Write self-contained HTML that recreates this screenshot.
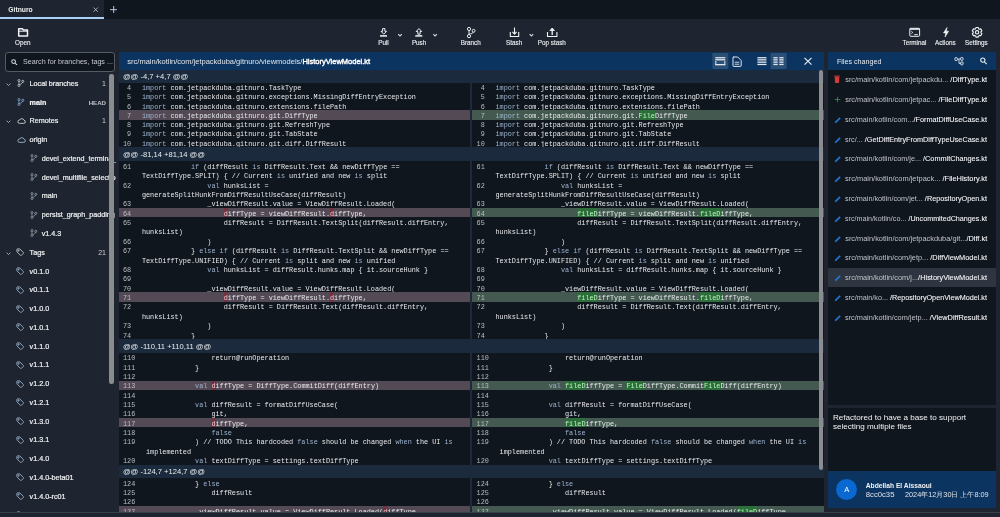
<!DOCTYPE html>
<html><head><meta charset="utf-8">
<style>
*{margin:0;padding:0;box-sizing:border-box}
html,body{width:1000px;height:517px;overflow:hidden;-webkit-font-smoothing:antialiased;background:#1f2530;font-family:"Liberation Sans",sans-serif;color:#e6e8eb}
.abs{position:absolute}
#tabbar{position:absolute;left:0;top:0;width:1000px;height:19px;background:#10161e}
#tab{position:absolute;left:0;top:0;width:104px;height:19px;background:#1f2530}
#tab .t{position:absolute;left:8.3px;top:5px;font-size:6.75px;font-weight:bold;color:#eef0f2;line-height:9px}
#tab .ul{position:absolute;left:0;top:17px;width:104px;height:2px;background:#a9d1f7}
.tb{position:absolute;top:23px;text-align:center;font-size:6.6px;color:#e4e6e9;line-height:8px}
.tb svg{position:absolute}
.tbl{position:absolute;top:38.9px;white-space:nowrap;font-size:6.3px;line-height:8px;color:#eceef1;-webkit-text-stroke:0.12px #eceef1}
#search{position:absolute;left:5px;top:52.3px;width:109.7px;height:19.3px;background:#10161e;border:1px solid #565b63;border-radius:3px}
#search .t{position:absolute;left:17px;top:5.1px;font-size:7.16px;color:#c4c7cc;white-space:nowrap;line-height:9px}
#sidebar{position:absolute;left:0;top:52px;width:115.5px;height:461px;overflow:hidden}
.sr{position:absolute;left:0;width:114px;height:18px}
.sr .st{overflow:visible}
.sr .chev{position:absolute;top:6.8px;line-height:0}
.sr .sic{position:absolute;top:5px;line-height:0}
.sr .st{position:absolute;top:4.5px;font-size:7.2px;line-height:9px;white-space:nowrap;color:#f0f2f4;-webkit-text-stroke:0.2px #f0f2f4}
.sr .st b{font-weight:normal}
.sr .sright{position:absolute;right:8px;top:4.5px;font-size:7px;line-height:9px;color:#c9ccd1}
#sscroll{position:absolute;left:109.2px;top:73.6px;width:4.4px;height:310.4px;background:#8a8c8f;border-radius:2.2px}
#diff{position:absolute;left:118.5px;top:51.8px;width:705.8px;height:460.5px;background:#10161e;overflow:hidden}
#dhead{position:absolute;left:0;top:0;width:100%;height:18px;background:#0b3460}
#dhead .p{position:absolute;left:8.8px;top:5.1px;font-size:7.5px;line-height:9px;color:#dfe4ea;white-space:nowrap}
#dhead .p b{color:#fff;font-weight:normal;-webkit-text-stroke:0.4px #fff}
#panes{position:absolute;left:0;top:18px;width:705.8px;height:443px}
.hh{position:absolute;height:12.7px;background:#1b2a3c}
.ht{position:absolute;left:4.4px;bottom:2.1px;font-size:7.6px;line-height:9px;color:#e9ecef;white-space:nowrap}
.row{position:absolute}
.row .n{position:absolute;left:0;top:0;text-align:right;font-family:"Liberation Mono",monospace;font-size:6.82px;line-height:9.39px;color:#b9bdc3;padding-top:1.6px}
.row .c{position:absolute;white-space:pre;font-family:"Liberation Mono",monospace;font-size:6.82px;line-height:9.39px;color:#e6e8eb;margin-top:1.6px}
.k{color:#9cb3cf}
.rh{color:#f5c9d0}
.ah{color:#b9f3bd}
#divider{position:absolute;left:351.1px;top:12.7px;width:2.5px;height:440px;background:#1e2a3a}
#dscroll{position:absolute;left:700.4px;top:18.6px;width:4.2px;height:399.3px;background:#8a8c8f;border-radius:2px}
#files{position:absolute;left:827.6px;top:51.6px;width:168.2px;height:353.9px;background:#10161e;overflow:hidden}
#fhead{position:absolute;left:0;top:0;width:100%;height:18.1px;background:#0b3460}
#fhead .t{position:absolute;left:9.3px;top:6.2px;font-size:7.15px;line-height:9px;color:#e6ebf0;white-space:nowrap}
.fr{position:absolute;left:0;width:168px;height:19.8px}
.fic{position:absolute;left:6.3px;top:6px;line-height:0}
.ft{position:absolute;left:17.6px;top:5.4px;font-size:7.4px;line-height:9px;white-space:pre;transform-origin:0 0}
.fa{color:#c0c3c8}
.fb{color:#f6f7f9;-webkit-text-stroke:0.08px #f6f7f9}
#msg{position:absolute;left:827.6px;top:407.5px;width:168.2px;height:63.5px;background:#10161e}
#msg .t{position:absolute;left:5.3px;top:5px;font-size:8.1px;line-height:9.3px;color:#f0f2f4;white-space:nowrap}
#author{position:absolute;left:827.6px;top:471px;width:168.2px;height:37px;background:#0b3460}
#avatar{position:absolute;left:8.5px;top:8px;width:21.2px;height:21.2px;border-radius:50%;background:#0a69d0;color:#fff;font-size:7.5px;text-align:center;line-height:21.2px}
#author .nm{position:absolute;left:38.2px;top:10px;font-size:6.7px;font-weight:bold;line-height:9px;color:#f0f2f4;white-space:nowrap}
#author .hs{position:absolute;left:38.2px;top:19px;font-size:7.7px;line-height:9px;color:#dfe3e8;white-space:nowrap}
#author .dt{position:absolute;left:77.4px;top:19px;font-size:7.3px;line-height:9px;color:#dfe3e8;white-space:nowrap}
#bottomline{position:absolute;left:0;top:512px;width:1000px;height:1px;background:#3a4049}
</style></head><body><div id="root" style="position:absolute;left:0;top:0;width:1000px;height:517px;will-change:transform">
<div id="tabbar">
  <div id="tab"><span class="t">Gitnuro</span>
    <svg class="abs" style="left:93.4px;top:7px" width="5.4" height="5.4" viewBox="0 0 10 10" stroke="#d8dbdf" stroke-width="1.3"><path d="M1 1l8 8M9 1L1 9"/></svg>
    <div class="ul"></div></div>
  <svg class="abs" style="left:110px;top:6px" width="7.4" height="7.4" viewBox="0 0 10 10" stroke="#c5dcf3" stroke-width="1.2"><path d="M5 0v10M0 5h10"/></svg>
</div>

<!-- toolbar -->
<svg class="abs" style="left:0;top:0" width="1000" height="52" viewBox="0 0 1000 52" fill="none" stroke="#f0f2f4" stroke-linejoin="round">
  <!-- open folder -->
  <path d="M18.7 28.8h3.6l1.1 1.1h4.1v6h-8.8z" stroke-width="1.5"/>
  <path d="M18.7 31.2h8.8" stroke-width="1"/>
  <!-- pull -->
  <path d="M382.6 28.6h2.3v2.7h1.6l-2.75 2.9-2.75-2.9h1.6z" stroke-width="1"/>
  <rect x="380" y="35" width="7" height="1.8" fill="#cfd1d4" stroke="none"/>
  <path d="M398.2 34.2l1.8 1.8 1.8-1.8" stroke="#d0d3d6" stroke-width="1.1"/>
  <!-- push -->
  <path d="M417.8 34.2h2.3v-2.7h1.6l-2.75-2.9-2.75 2.9h1.6z" stroke-width="1"/>
  <rect x="415.3" y="35" width="7" height="1.8" fill="#cfd1d4" stroke="none"/>
  <path d="M433.3 34.2l1.8 1.8 1.8-1.8" stroke="#d0d3d6" stroke-width="1.1"/>
  <!-- branch -->
  <circle cx="469" cy="28.95" r="1.6" stroke-width="0.95"/>
  <circle cx="469" cy="36.1" r="1.6" stroke-width="0.95"/>
  <circle cx="473.6" cy="30.8" r="1.45" stroke-width="0.95"/>
  <path d="M469 30.55v3.95M473.3 32.2c-.4 1.3-2.2 1.6-4.1 1.8" stroke-width="0.95"/>
  <!-- stash -->
  <path d="M510.3 32v4.5h8.4V32" stroke-width="1.1"/>
  <path d="M514.5 27.6v6.4M512.4 31.8l2.1 2.3 2.1-2.3" stroke-width="1.1"/>
  <path d="M529.6 34.2l1.8 1.8 1.8-1.8" stroke="#d0d3d6" stroke-width="1.1"/>
  <!-- pop stash -->
  <path d="M547.5 32v4.5h9.4V32" stroke-width="1.1"/>
  <path d="M552.2 35v-6.2" stroke-width="1.3"/>
  <path d="M549.9 30.5l2.3-2.5 2.3 2.5z" fill="#f0f2f4" stroke-width="0.8"/>
  <!-- terminal -->
  <rect x="909.8" y="28.3" width="9.8" height="8" rx="0.8" stroke-width="1"/>
  <path d="M909.8 29.1h9.8" stroke-width="1.4"/>
  <path d="M911.3 31.3l1.5 1.2-1.5 1.2" stroke-width="0.8"/>
  <path d="M914.3 34.6h3.5" stroke-width="0.9"/>
  <!-- bolt -->
  <path d="M947 27.5L943.5 32.9h2.3L945.1 37l3.5-5.8h-2.3z" fill="#f0f2f4" stroke-width="0.6"/>
  <!-- gear -->
  <path d="M975.98 27.43 L978.22 27.43 L978.56 28.68 L979.50 29.23 L980.76 28.89 L981.88 30.84 L980.96 31.76 L980.96 32.84 L981.88 33.76 L980.76 35.71 L979.50 35.37 L978.56 35.92 L978.22 37.17 L975.98 37.17 L975.64 35.92 L974.70 35.37 L973.44 35.71 L972.32 33.76 L973.24 32.84 L973.24 31.76 L972.32 30.84 L973.44 28.89 L974.70 29.23 L975.64 28.68z" stroke-width="1.1"/>
  <circle cx="977.1" cy="32.3" r="1.7" stroke-width="1.1"/>
</svg>
<span class="tbl" style="left:15.1px">Open</span>
<span class="tbl" style="left:378.2px">Pull</span>
<span class="tbl" style="left:411.9px">Push</span>
<span class="tbl" style="left:460.7px">Branch</span>
<span class="tbl" style="left:506.1px">Stash</span>
<span class="tbl" style="left:537.8px">Pop stash</span>
<span class="tbl" style="left:902.5px">Terminal</span>
<span class="tbl" style="left:935px">Actions</span>
<span class="tbl" style="left:965px">Settings</span>

<div id="search">
  <svg class="abs" style="left:5.4px;top:5.4px" width="6.6" height="6.6" viewBox="0 0 14 14" fill="none" stroke="#d8dbdf" stroke-width="2.2"><circle cx="5.5" cy="5.5" r="4"/><path d="M8.5 8.5l4.5 4.5"/></svg>
  <span class="t">Search for branches, tags ...</span>
</div>
<div id="sidebar">
<div class=sr style="top:22.40px">
<span class=chev style="left:6px"><svg width="5" height="3.4" viewBox="0 0 12 8" fill="none" stroke="#c9ccd1" stroke-width="1.8"><path d="M1.5 1.5l4.5 4.5 4.5-4.5"/></svg></span>
<span class=sic style="left:17px;top:5px"><svg width="7.6" height="8" viewBox="0 0 23 24" fill="none" stroke="#d5d8dc" stroke-width="2.3"><circle cx="6" cy="4.6" r="3.2"/><circle cx="6" cy="19.4" r="3.2"/><circle cx="17.5" cy="7" r="3.2"/><path d="M6 7.8v8.4M16.6 10.1c-.8 3.6-5 5.2-8.4 6.6"/></svg></span>
<span class=st style="left:29.6px"><b>Local branches</b></span>
<span class=sright>1</span>
</div>
<div class=sr style="top:41.16px">
<span class=sic style="left:17px;top:5px"><svg width="7.6" height="8" viewBox="0 0 23 24" fill="none" stroke="#8fb4dc" stroke-width="2.3"><circle cx="6" cy="4.6" r="3.2"/><circle cx="6" cy="19.4" r="3.2"/><circle cx="17.5" cy="7" r="3.2"/><path d="M6 7.8v8.4M16.6 10.1c-.8 3.6-5 5.2-8.4 6.6"/></svg></span>
<span class=st style="left:29.6px"><b style="font-weight:bold">main</b></span>
<span class=sright style="font-weight:bold;font-size:6.1px;color:#c3c6cb;top:5px">HEAD</span>
</div>
<div class=sr style="top:59.92px">
<span class=chev style="left:6px"><svg width="5" height="3.4" viewBox="0 0 12 8" fill="none" stroke="#c9ccd1" stroke-width="1.8"><path d="M1.5 1.5l4.5 4.5 4.5-4.5"/></svg></span>
<span class=sic style="left:16.8px;top:6.1px"><svg width="9" height="6" viewBox="0 0 27 18" fill="none" stroke="#d5d8dc" stroke-width="2.6"><path d="M7 16h13.5a4.6 4.6 0 0 0 .6-9.15A7 7 0 0 0 8 6.2 4.9 4.9 0 0 0 7 16z"/></svg></span>
<span class=st style="left:29.6px"><b>Remotes</b></span>
<span class=sright>1</span>
</div>
<div class=sr style="top:78.68px">
<span class=sic style="left:16.8px;top:6.1px"><svg width="9" height="6" viewBox="0 0 27 18" fill="none" stroke="#a9bccd" stroke-width="2.6"><path d="M7 16h13.5a4.6 4.6 0 0 0 .6-9.15A7 7 0 0 0 8 6.2 4.9 4.9 0 0 0 7 16z"/></svg></span>
<span class=st style="left:29.6px"><b>origin</b></span>
</div>
<div class=sr style="top:97.44px">
<span class=sic style="left:30px;top:5px"><svg width="7.6" height="8" viewBox="0 0 23 24" fill="none" stroke="#9fa8b4" stroke-width="2.3"><circle cx="6" cy="4.6" r="3.2"/><circle cx="6" cy="19.4" r="3.2"/><circle cx="17.5" cy="7" r="3.2"/><path d="M6 7.8v8.4M16.6 10.1c-.8 3.6-5 5.2-8.4 6.6"/></svg></span>
<span class=st style="left:41.7px"><b>devel_extend_terminal_support</b></span>
</div>
<div class=sr style="top:116.20px">
<span class=sic style="left:30px;top:5px"><svg width="7.6" height="8" viewBox="0 0 23 24" fill="none" stroke="#9fa8b4" stroke-width="2.3"><circle cx="6" cy="4.6" r="3.2"/><circle cx="6" cy="19.4" r="3.2"/><circle cx="17.5" cy="7" r="3.2"/><path d="M6 7.8v8.4M16.6 10.1c-.8 3.6-5 5.2-8.4 6.6"/></svg></span>
<span class=st style="left:41.7px"><b>devel_multifile_selection</b></span>
</div>
<div class=sr style="top:134.96px">
<span class=sic style="left:30px;top:5px"><svg width="7.6" height="8" viewBox="0 0 23 24" fill="none" stroke="#9fa8b4" stroke-width="2.3"><circle cx="6" cy="4.6" r="3.2"/><circle cx="6" cy="19.4" r="3.2"/><circle cx="17.5" cy="7" r="3.2"/><path d="M6 7.8v8.4M16.6 10.1c-.8 3.6-5 5.2-8.4 6.6"/></svg></span>
<span class=st style="left:41.7px"><b>main</b></span>
</div>
<div class=sr style="top:153.72px">
<span class=sic style="left:30px;top:5px"><svg width="7.6" height="8" viewBox="0 0 23 24" fill="none" stroke="#9fa8b4" stroke-width="2.3"><circle cx="6" cy="4.6" r="3.2"/><circle cx="6" cy="19.4" r="3.2"/><circle cx="17.5" cy="7" r="3.2"/><path d="M6 7.8v8.4M16.6 10.1c-.8 3.6-5 5.2-8.4 6.6"/></svg></span>
<span class=st style="left:41.7px"><b>persist_graph_padding</b></span>
</div>
<div class=sr style="top:172.48px">
<span class=sic style="left:30px;top:5px"><svg width="7.6" height="8" viewBox="0 0 23 24" fill="none" stroke="#9fa8b4" stroke-width="2.3"><circle cx="6" cy="4.6" r="3.2"/><circle cx="6" cy="19.4" r="3.2"/><circle cx="17.5" cy="7" r="3.2"/><path d="M6 7.8v8.4M16.6 10.1c-.8 3.6-5 5.2-8.4 6.6"/></svg></span>
<span class=st style="left:41.7px"><b>v1.4.3</b></span>
</div>
<div class=sr style="top:191.24px">
<span class=chev style="left:6px"><svg width="5" height="3.4" viewBox="0 0 12 8" fill="none" stroke="#c9ccd1" stroke-width="1.8"><path d="M1.5 1.5l4.5 4.5 4.5-4.5"/></svg></span>
<span class=sic style="left:16px;top:5px"><svg width="8.6" height="8.6" viewBox="0 0 24 24" fill="none" stroke="#d5d8dc" stroke-width="2.2" stroke-linejoin="round"><path d="M2.5 4v6.6l10 10a1.8 1.8 0 0 0 2.5 0l5.6-5.6a1.8 1.8 0 0 0 0-2.5l-10-10H4a1.5 1.5 0 0 0-1.5 1.5z"/><circle cx="7.3" cy="7.3" r="1.6"/></svg></span>
<span class=st style="left:29.6px"><b>Tags</b></span>
<span class=sright>21</span>
</div>
<div class=sr style="top:210.00px">
<span class=sic style="left:16px;top:5px"><svg width="8.6" height="8.6" viewBox="0 0 24 24" fill="none" stroke="#a9c4e0" stroke-width="2.2" stroke-linejoin="round"><path d="M2.5 4v6.6l10 10a1.8 1.8 0 0 0 2.5 0l5.6-5.6a1.8 1.8 0 0 0 0-2.5l-10-10H4a1.5 1.5 0 0 0-1.5 1.5z"/><circle cx="7.3" cy="7.3" r="1.6"/></svg></span>
<span class=st style="left:29.6px"><b>v0.1.0</b></span>
</div>
<div class=sr style="top:228.76px">
<span class=sic style="left:16px;top:5px"><svg width="8.6" height="8.6" viewBox="0 0 24 24" fill="none" stroke="#a9c4e0" stroke-width="2.2" stroke-linejoin="round"><path d="M2.5 4v6.6l10 10a1.8 1.8 0 0 0 2.5 0l5.6-5.6a1.8 1.8 0 0 0 0-2.5l-10-10H4a1.5 1.5 0 0 0-1.5 1.5z"/><circle cx="7.3" cy="7.3" r="1.6"/></svg></span>
<span class=st style="left:29.6px"><b>v0.1.1</b></span>
</div>
<div class=sr style="top:247.52px">
<span class=sic style="left:16px;top:5px"><svg width="8.6" height="8.6" viewBox="0 0 24 24" fill="none" stroke="#a9c4e0" stroke-width="2.2" stroke-linejoin="round"><path d="M2.5 4v6.6l10 10a1.8 1.8 0 0 0 2.5 0l5.6-5.6a1.8 1.8 0 0 0 0-2.5l-10-10H4a1.5 1.5 0 0 0-1.5 1.5z"/><circle cx="7.3" cy="7.3" r="1.6"/></svg></span>
<span class=st style="left:29.6px"><b>v1.0.0</b></span>
</div>
<div class=sr style="top:266.28px">
<span class=sic style="left:16px;top:5px"><svg width="8.6" height="8.6" viewBox="0 0 24 24" fill="none" stroke="#a9c4e0" stroke-width="2.2" stroke-linejoin="round"><path d="M2.5 4v6.6l10 10a1.8 1.8 0 0 0 2.5 0l5.6-5.6a1.8 1.8 0 0 0 0-2.5l-10-10H4a1.5 1.5 0 0 0-1.5 1.5z"/><circle cx="7.3" cy="7.3" r="1.6"/></svg></span>
<span class=st style="left:29.6px"><b>v1.0.1</b></span>
</div>
<div class=sr style="top:285.04px">
<span class=sic style="left:16px;top:5px"><svg width="8.6" height="8.6" viewBox="0 0 24 24" fill="none" stroke="#a9c4e0" stroke-width="2.2" stroke-linejoin="round"><path d="M2.5 4v6.6l10 10a1.8 1.8 0 0 0 2.5 0l5.6-5.6a1.8 1.8 0 0 0 0-2.5l-10-10H4a1.5 1.5 0 0 0-1.5 1.5z"/><circle cx="7.3" cy="7.3" r="1.6"/></svg></span>
<span class=st style="left:29.6px"><b>v1.1.0</b></span>
</div>
<div class=sr style="top:303.80px">
<span class=sic style="left:16px;top:5px"><svg width="8.6" height="8.6" viewBox="0 0 24 24" fill="none" stroke="#a9c4e0" stroke-width="2.2" stroke-linejoin="round"><path d="M2.5 4v6.6l10 10a1.8 1.8 0 0 0 2.5 0l5.6-5.6a1.8 1.8 0 0 0 0-2.5l-10-10H4a1.5 1.5 0 0 0-1.5 1.5z"/><circle cx="7.3" cy="7.3" r="1.6"/></svg></span>
<span class=st style="left:29.6px"><b>v1.1.1</b></span>
</div>
<div class=sr style="top:322.56px">
<span class=sic style="left:16px;top:5px"><svg width="8.6" height="8.6" viewBox="0 0 24 24" fill="none" stroke="#a9c4e0" stroke-width="2.2" stroke-linejoin="round"><path d="M2.5 4v6.6l10 10a1.8 1.8 0 0 0 2.5 0l5.6-5.6a1.8 1.8 0 0 0 0-2.5l-10-10H4a1.5 1.5 0 0 0-1.5 1.5z"/><circle cx="7.3" cy="7.3" r="1.6"/></svg></span>
<span class=st style="left:29.6px"><b>v1.2.0</b></span>
</div>
<div class=sr style="top:341.32px">
<span class=sic style="left:16px;top:5px"><svg width="8.6" height="8.6" viewBox="0 0 24 24" fill="none" stroke="#a9c4e0" stroke-width="2.2" stroke-linejoin="round"><path d="M2.5 4v6.6l10 10a1.8 1.8 0 0 0 2.5 0l5.6-5.6a1.8 1.8 0 0 0 0-2.5l-10-10H4a1.5 1.5 0 0 0-1.5 1.5z"/><circle cx="7.3" cy="7.3" r="1.6"/></svg></span>
<span class=st style="left:29.6px"><b>v1.2.1</b></span>
</div>
<div class=sr style="top:360.08px">
<span class=sic style="left:16px;top:5px"><svg width="8.6" height="8.6" viewBox="0 0 24 24" fill="none" stroke="#a9c4e0" stroke-width="2.2" stroke-linejoin="round"><path d="M2.5 4v6.6l10 10a1.8 1.8 0 0 0 2.5 0l5.6-5.6a1.8 1.8 0 0 0 0-2.5l-10-10H4a1.5 1.5 0 0 0-1.5 1.5z"/><circle cx="7.3" cy="7.3" r="1.6"/></svg></span>
<span class=st style="left:29.6px"><b>v1.3.0</b></span>
</div>
<div class=sr style="top:378.84px">
<span class=sic style="left:16px;top:5px"><svg width="8.6" height="8.6" viewBox="0 0 24 24" fill="none" stroke="#a9c4e0" stroke-width="2.2" stroke-linejoin="round"><path d="M2.5 4v6.6l10 10a1.8 1.8 0 0 0 2.5 0l5.6-5.6a1.8 1.8 0 0 0 0-2.5l-10-10H4a1.5 1.5 0 0 0-1.5 1.5z"/><circle cx="7.3" cy="7.3" r="1.6"/></svg></span>
<span class=st style="left:29.6px"><b>v1.3.1</b></span>
</div>
<div class=sr style="top:397.60px">
<span class=sic style="left:16px;top:5px"><svg width="8.6" height="8.6" viewBox="0 0 24 24" fill="none" stroke="#a9c4e0" stroke-width="2.2" stroke-linejoin="round"><path d="M2.5 4v6.6l10 10a1.8 1.8 0 0 0 2.5 0l5.6-5.6a1.8 1.8 0 0 0 0-2.5l-10-10H4a1.5 1.5 0 0 0-1.5 1.5z"/><circle cx="7.3" cy="7.3" r="1.6"/></svg></span>
<span class=st style="left:29.6px"><b>v1.4.0</b></span>
</div>
<div class=sr style="top:416.36px">
<span class=sic style="left:16px;top:5px"><svg width="8.6" height="8.6" viewBox="0 0 24 24" fill="none" stroke="#a9c4e0" stroke-width="2.2" stroke-linejoin="round"><path d="M2.5 4v6.6l10 10a1.8 1.8 0 0 0 2.5 0l5.6-5.6a1.8 1.8 0 0 0 0-2.5l-10-10H4a1.5 1.5 0 0 0-1.5 1.5z"/><circle cx="7.3" cy="7.3" r="1.6"/></svg></span>
<span class=st style="left:29.6px"><b>v1.4.0-beta01</b></span>
</div>
<div class=sr style="top:435.12px">
<span class=sic style="left:16px;top:5px"><svg width="8.6" height="8.6" viewBox="0 0 24 24" fill="none" stroke="#a9c4e0" stroke-width="2.2" stroke-linejoin="round"><path d="M2.5 4v6.6l10 10a1.8 1.8 0 0 0 2.5 0l5.6-5.6a1.8 1.8 0 0 0 0-2.5l-10-10H4a1.5 1.5 0 0 0-1.5 1.5z"/><circle cx="7.3" cy="7.3" r="1.6"/></svg></span>
<span class=st style="left:29.6px"><b>v1.4.0-rc01</b></span>
</div>
<div class=sr style="top:453.88px">
<span class=sic style="left:16px;top:5px"><svg width="8.6" height="8.6" viewBox="0 0 24 24" fill="none" stroke="#a9c4e0" stroke-width="2.2" stroke-linejoin="round"><path d="M2.5 4v6.6l10 10a1.8 1.8 0 0 0 2.5 0l5.6-5.6a1.8 1.8 0 0 0 0-2.5l-10-10H4a1.5 1.5 0 0 0-1.5 1.5z"/><circle cx="7.3" cy="7.3" r="1.6"/></svg></span>
<span class=st style="left:29.6px"><b>v1.4.1</b></span>
</div>
</div>
<div id="sscroll"></div>

<div id="diff">
  <div id="dhead"><span class="p">src/main/kotlin/com/jetpackduba/gitnuro/viewmodels/<b>HistoryViewModel.kt</b></span>
  <svg class="abs" style="left:0;top:0" width="705.8" height="18" viewBox="118.5 51.8 705.8 18">
   <rect x="711.9" y="52.8" width="15.9" height="16" rx="1" fill="#2b4f74"/>
   <rect x="770" y="52.8" width="16.2" height="16" rx="1" fill="#2b4f74"/>
   <g fill="#dfe6ee">
    <rect x="714.8" y="56.9" width="10" height="1.3"/><rect x="714.8" y="58.9" width="10" height="1.3"/>
    <rect x="714.8" y="63.8" width="10" height="1.3"/>
    <rect x="714.8" y="60.8" width="1" height="4"/><rect x="723.8" y="60.8" width="1" height="4"/>
    <rect x="756.9" y="56.9" width="9.1" height="1.3"/><rect x="756.9" y="59" width="9.1" height="1.3"/><rect x="756.9" y="61.3" width="9.1" height="1.3"/><rect x="756.9" y="63.6" width="9.1" height="1.3"/>
    <rect x="772.9" y="56.9" width="4.3" height="1.3"/><rect x="772.9" y="59" width="4.3" height="1.3"/><rect x="772.9" y="61.3" width="4.3" height="1.3"/><rect x="772.9" y="63.6" width="4.3" height="1.3"/>
    <rect x="778.8" y="56.9" width="4.3" height="1.3"/><rect x="778.8" y="59" width="4.3" height="1.3"/><rect x="778.8" y="61.3" width="4.3" height="1.3"/><rect x="778.8" y="63.6" width="4.3" height="1.3"/>
   </g>
   <path d="M732.6 56.8h4.6l3.5 3.5v5.3a.6.6 0 0 1-.6.6h-7a.6.6 0 0 1-.6-.6v-8.2a.6.6 0 0 1 .6-.6z" fill="none" stroke="#dfe6ee" stroke-width="1"/>
   <path d="M734.2 62h4.6M734.2 64h4.6" stroke="#dfe6ee" stroke-width="0.9"/>
   <path d="M804 57.6l7 6.8M811 57.6l-7 6.8" stroke="#eef2f6" stroke-width="1.1"/>
  </svg>
  </div>
  <div id="panes">
<div class=hh style="top:0.00px;left:0px;width:354px;height:12.8px"><span class=ht>@@ -4,7 +4,7 @@</span></div>
<div class=row style="top:12.80px;left:0px;width:351px;height:9.26px;">
<span class=n style="width:12.68px">4</span>
<span class=c style="left:23.42px;top:0.00px"><span class=k>import</span> com.jetpackduba.gitnuro.TaskType</span>
</div>
<div class=row style="top:22.06px;left:0px;width:351px;height:9.26px;">
<span class=n style="width:12.68px">5</span>
<span class=c style="left:23.42px;top:0.00px"><span class=k>import</span> com.jetpackduba.gitnuro.exceptions.MissingDiffEntryException</span>
</div>
<div class=row style="top:31.31px;left:0px;width:351px;height:9.26px;">
<span class=n style="width:12.68px">6</span>
<span class=c style="left:23.42px;top:0.00px"><span class=k>import</span> com.jetpackduba.gitnuro.extensions.filePath</span>
</div>
<div class=row style="top:40.57px;left:0px;width:351px;height:9.26px;background:#544a55;">
<span class=n style="width:12.68px">7</span>
<span class=c style="left:23.42px;top:0.00px"><span class=k>import</span> com.jetpackduba.gitnuro.git.DiffType</span>
</div>
<div class=row style="top:49.83px;left:0px;width:351px;height:9.26px;">
<span class=n style="width:12.68px">8</span>
<span class=c style="left:23.42px;top:0.00px"><span class=k>import</span> com.jetpackduba.gitnuro.git.RefreshType</span>
</div>
<div class=row style="top:59.08px;left:0px;width:351px;height:9.26px;">
<span class=n style="width:12.68px">9</span>
<span class=c style="left:23.42px;top:0.00px"><span class=k>import</span> com.jetpackduba.gitnuro.git.TabState</span>
</div>
<div class=row style="top:68.34px;left:0px;width:351px;height:9.26px;">
<span class=n style="width:12.68px">10</span>
<span class=c style="left:23.42px;top:0.00px"><span class=k>import</span> com.jetpackduba.gitnuro.git.diff.DiffResult</span>
</div>
<div class=hh style="top:77.60px;left:0px;width:354px;height:13.8px"><span class=ht>@@ -81,14 +81,14 @@</span></div>
<div class=row style="top:91.40px;left:0px;width:351px;height:18.75px;">
<span class=n style="width:12.68px">61</span>
<span class=c style="left:23.42px;top:0.00px">            <span class=k>if</span> (diffResult <span class=k>is</span> DiffResult.Text &amp;&amp; newDiffType ==</span>
<span class=c style="left:23.42px;top:9.38px">TextDiffType.SPLIT) { // Current <span class=k>is</span> unified and new <span class=k>is</span> split</span>
</div>
<div class=row style="top:110.15px;left:0px;width:351px;height:18.75px;">
<span class=n style="width:12.68px">62</span>
<span class=c style="left:23.42px;top:0.00px">                <span class=k>val</span> hunksList =</span>
<span class=c style="left:23.42px;top:9.38px">generateSplitHunkFromDiffResultUseCase(diffResult)</span>
</div>
<div class=row style="top:128.90px;left:0px;width:351px;height:9.38px;">
<span class=n style="width:12.68px">63</span>
<span class=c style="left:23.42px;top:0.00px">                _viewDiffResult.value = ViewDiffResult.Loaded(</span>
</div>
<div class=row style="top:138.28px;left:0px;width:351px;height:9.38px;background:#544a55;">
<div style="position:absolute;left:105.26px;top:0;width:4.09px;height:9.376px;background:#70333f"></div>
<div style="position:absolute;left:211.66px;top:0;width:4.09px;height:9.376px;background:#70333f"></div>
<span class=n style="width:12.68px">64</span>
<span class=c style="left:23.42px;top:0.00px">                    <span class=rh>d</span>iffType = viewDiffResult.<span class=rh>d</span>iffType,</span>
</div>
<div class=row style="top:147.66px;left:0px;width:351px;height:18.75px;">
<span class=n style="width:12.68px">65</span>
<span class=c style="left:23.42px;top:0.00px">                    diffResult = DiffResult.TextSplit(diffResult.diffEntry,</span>
<span class=c style="left:23.42px;top:9.38px">hunksList)</span>
</div>
<div class=row style="top:166.41px;left:0px;width:351px;height:9.38px;">
<span class=n style="width:12.68px">66</span>
<span class=c style="left:23.42px;top:0.00px">                )</span>
</div>
<div class=row style="top:175.78px;left:0px;width:351px;height:18.75px;">
<span class=n style="width:12.68px">67</span>
<span class=c style="left:23.42px;top:0.00px">            } <span class=k>else</span> <span class=k>if</span> (diffResult <span class=k>is</span> DiffResult.TextSplit &amp;&amp; newDiffType ==</span>
<span class=c style="left:23.42px;top:9.38px">TextDiffType.UNIFIED) { // Current <span class=k>is</span> split and new <span class=k>is</span> unified</span>
</div>
<div class=row style="top:194.54px;left:0px;width:351px;height:9.38px;">
<span class=n style="width:12.68px">68</span>
<span class=c style="left:23.42px;top:0.00px">                <span class=k>val</span> hunksList = diffResult.hunks.map { it.sourceHunk }</span>
</div>
<div class=row style="top:203.91px;left:0px;width:351px;height:9.38px;">
<span class=n style="width:12.68px">69</span>
<span class=c style="left:23.42px;top:0.00px"></span>
</div>
<div class=row style="top:213.29px;left:0px;width:351px;height:9.38px;">
<span class=n style="width:12.68px">70</span>
<span class=c style="left:23.42px;top:0.00px">                _viewDiffResult.value = ViewDiffResult.Loaded(</span>
</div>
<div class=row style="top:222.66px;left:0px;width:351px;height:9.38px;background:#544a55;">
<div style="position:absolute;left:105.26px;top:0;width:4.09px;height:9.376px;background:#70333f"></div>
<div style="position:absolute;left:211.66px;top:0;width:4.09px;height:9.376px;background:#70333f"></div>
<span class=n style="width:12.68px">71</span>
<span class=c style="left:23.42px;top:0.00px">                    <span class=rh>d</span>iffType = viewDiffResult.<span class=rh>d</span>iffType,</span>
</div>
<div class=row style="top:232.04px;left:0px;width:351px;height:18.75px;">
<span class=n style="width:12.68px">72</span>
<span class=c style="left:23.42px;top:0.00px">                    diffResult = DiffResult.Text(diffResult.diffEntry,</span>
<span class=c style="left:23.42px;top:9.38px">hunksList)</span>
</div>
<div class=row style="top:250.79px;left:0px;width:351px;height:9.38px;">
<span class=n style="width:12.68px">73</span>
<span class=c style="left:23.42px;top:0.00px">                )</span>
</div>
<div class=row style="top:260.17px;left:0px;width:351px;height:9.38px;">
<span class=n style="width:12.68px">74</span>
<span class=c style="left:23.42px;top:0.00px">            }</span>
</div>
<div class=hh style="top:269.55px;left:0px;width:354px;height:13.35px"><span class=ht>@@ -110,11 +110,11 @@</span></div>
<div class=row style="top:282.90px;left:0px;width:351px;height:9.32px;">
<span class=n style="width:16.78px">110</span>
<span class=c style="left:27.52px;top:0.00px">                return@runOperation</span>
</div>
<div class=row style="top:292.23px;left:0px;width:351px;height:9.32px;">
<span class=n style="width:16.78px">111</span>
<span class=c style="left:27.52px;top:0.00px">            }</span>
</div>
<div class=row style="top:301.55px;left:0px;width:351px;height:9.32px;">
<span class=n style="width:16.78px">112</span>
<span class=c style="left:27.52px;top:0.00px"></span>
</div>
<div class=row style="top:310.88px;left:0px;width:351px;height:9.32px;background:#544a55;">
<div style="position:absolute;left:92.99px;top:0;width:4.09px;height:9.325px;background:#70333f"></div>
<span class=n style="width:16.78px">113</span>
<span class=c style="left:27.52px;top:0.00px">            <span class=k>val</span> <span class=rh>d</span>iffType = DiffType.CommitDiff(diffEntry)</span>
</div>
<div class=row style="top:320.20px;left:0px;width:351px;height:9.32px;">
<span class=n style="width:16.78px">114</span>
<span class=c style="left:27.52px;top:0.00px"></span>
</div>
<div class=row style="top:329.52px;left:0px;width:351px;height:9.32px;">
<span class=n style="width:16.78px">115</span>
<span class=c style="left:27.52px;top:0.00px">            <span class=k>val</span> diffResult = formatDiffUseCase(</span>
</div>
<div class=row style="top:338.85px;left:0px;width:351px;height:9.32px;">
<span class=n style="width:16.78px">116</span>
<span class=c style="left:27.52px;top:0.00px">                git,</span>
</div>
<div class=row style="top:348.17px;left:0px;width:351px;height:9.32px;background:#544a55;">
<div style="position:absolute;left:92.99px;top:0;width:4.09px;height:9.325px;background:#70333f"></div>
<span class=n style="width:16.78px">117</span>
<span class=c style="left:27.52px;top:0.00px">                <span class=rh>d</span>iffType,</span>
</div>
<div class=row style="top:357.50px;left:0px;width:351px;height:9.32px;">
<span class=n style="width:16.78px">118</span>
<span class=c style="left:27.52px;top:0.00px">                <span class=k>false</span></span>
</div>
<div class=row style="top:366.82px;left:0px;width:351px;height:18.65px;">
<span class=n style="width:16.78px">119</span>
<span class=c style="left:27.52px;top:0.00px">            ) // TODO This hardcoded <span class=k>false</span> should be changed <span class=k>when</span> the UI <span class=k>is</span></span>
<span class=c style="left:27.52px;top:9.32px">implemented</span>
</div>
<div class=row style="top:385.47px;left:0px;width:351px;height:9.32px;">
<span class=n style="width:16.78px">120</span>
<span class=c style="left:27.52px;top:0.00px">            <span class=k>val</span> textDiffType = settings.textDiffType</span>
</div>
<div class=hh style="top:394.80px;left:0px;width:354px;height:13.4px"><span class=ht>@@ -124,7 +124,7 @@</span></div>
<div class=row style="top:408.20px;left:0px;width:351px;height:9.40px;">
<span class=n style="width:16.78px">124</span>
<span class=c style="left:27.52px;top:0.00px">            } <span class=k>else</span></span>
</div>
<div class=row style="top:417.60px;left:0px;width:351px;height:9.40px;">
<span class=n style="width:16.78px">125</span>
<span class=c style="left:27.52px;top:0.00px">                diffResult</span>
</div>
<div class=row style="top:427.00px;left:0px;width:351px;height:9.40px;">
<span class=n style="width:16.78px">126</span>
<span class=c style="left:27.52px;top:0.00px"></span>
</div>
<div class=row style="top:436.40px;left:0px;width:351px;height:18.80px;background:#544a55;">
<div style="position:absolute;left:264.85px;top:0;width:4.09px;height:9.400px;background:#70333f"></div>
<span class=n style="width:16.78px">127</span>
<span class=c style="left:27.52px;top:0.00px">            _viewDiffResult.value = ViewDiffResult.Loaded(<span class=rh>d</span>iffType,</span>
<span class=c style="left:27.52px;top:9.40px">diffResult)</span>
</div>
<div class=hh style="top:0.00px;left:353.6px;width:352.2px;height:12.8px"></div>
<div class=row style="top:12.80px;left:353.6px;width:352.2px;height:9.26px;">
<span class=n style="width:12.68px">4</span>
<span class=c style="left:23.42px;top:0.00px"><span class=k>import</span> com.jetpackduba.gitnuro.TaskType</span>
</div>
<div class=row style="top:22.06px;left:353.6px;width:352.2px;height:9.26px;">
<span class=n style="width:12.68px">5</span>
<span class=c style="left:23.42px;top:0.00px"><span class=k>import</span> com.jetpackduba.gitnuro.exceptions.MissingDiffEntryException</span>
</div>
<div class=row style="top:31.31px;left:353.6px;width:352.2px;height:9.26px;">
<span class=n style="width:12.68px">6</span>
<span class=c style="left:23.42px;top:0.00px"><span class=k>import</span> com.jetpackduba.gitnuro.extensions.filePath</span>
</div>
<div class=row style="top:40.57px;left:353.6px;width:352.2px;height:9.26px;background:#445a50;">
<div style="position:absolute;left:166.64px;top:0;width:16.37px;height:9.257px;background:#2d6f3a"></div>
<span class=n style="width:12.68px">7</span>
<span class=c style="left:23.42px;top:0.00px"><span class=k>import</span> com.jetpackduba.gitnuro.git.<span class=ah>File</span>DiffType</span>
</div>
<div class=row style="top:49.83px;left:353.6px;width:352.2px;height:9.26px;">
<span class=n style="width:12.68px">8</span>
<span class=c style="left:23.42px;top:0.00px"><span class=k>import</span> com.jetpackduba.gitnuro.git.RefreshType</span>
</div>
<div class=row style="top:59.08px;left:353.6px;width:352.2px;height:9.26px;">
<span class=n style="width:12.68px">9</span>
<span class=c style="left:23.42px;top:0.00px"><span class=k>import</span> com.jetpackduba.gitnuro.git.TabState</span>
</div>
<div class=row style="top:68.34px;left:353.6px;width:352.2px;height:9.26px;">
<span class=n style="width:12.68px">10</span>
<span class=c style="left:23.42px;top:0.00px"><span class=k>import</span> com.jetpackduba.gitnuro.git.diff.DiffResult</span>
</div>
<div class=hh style="top:77.60px;left:353.6px;width:352.2px;height:13.8px"></div>
<div class=row style="top:91.40px;left:353.6px;width:352.2px;height:18.75px;">
<span class=n style="width:12.68px">61</span>
<span class=c style="left:23.42px;top:0.00px">            <span class=k>if</span> (diffResult <span class=k>is</span> DiffResult.Text &amp;&amp; newDiffType ==</span>
<span class=c style="left:23.42px;top:9.38px">TextDiffType.SPLIT) { // Current <span class=k>is</span> unified and new <span class=k>is</span> split</span>
</div>
<div class=row style="top:110.15px;left:353.6px;width:352.2px;height:18.75px;">
<span class=n style="width:12.68px">62</span>
<span class=c style="left:23.42px;top:0.00px">                <span class=k>val</span> hunksList =</span>
<span class=c style="left:23.42px;top:9.38px">generateSplitHunkFromDiffResultUseCase(diffResult)</span>
</div>
<div class=row style="top:128.90px;left:353.6px;width:352.2px;height:9.38px;">
<span class=n style="width:12.68px">63</span>
<span class=c style="left:23.42px;top:0.00px">                _viewDiffResult.value = ViewDiffResult.Loaded(</span>
</div>
<div class=row style="top:138.28px;left:353.6px;width:352.2px;height:9.38px;background:#445a50;">
<div style="position:absolute;left:105.26px;top:0;width:20.46px;height:9.376px;background:#2d6f3a"></div>
<div style="position:absolute;left:228.02px;top:0;width:20.46px;height:9.376px;background:#2d6f3a"></div>
<span class=n style="width:12.68px">64</span>
<span class=c style="left:23.42px;top:0.00px">                    <span class=ah>fileD</span>iffType = viewDiffResult.<span class=ah>fileD</span>iffType,</span>
</div>
<div class=row style="top:147.66px;left:353.6px;width:352.2px;height:18.75px;">
<span class=n style="width:12.68px">65</span>
<span class=c style="left:23.42px;top:0.00px">                    diffResult = DiffResult.TextSplit(diffResult.diffEntry,</span>
<span class=c style="left:23.42px;top:9.38px">hunksList)</span>
</div>
<div class=row style="top:166.41px;left:353.6px;width:352.2px;height:9.38px;">
<span class=n style="width:12.68px">66</span>
<span class=c style="left:23.42px;top:0.00px">                )</span>
</div>
<div class=row style="top:175.78px;left:353.6px;width:352.2px;height:18.75px;">
<span class=n style="width:12.68px">67</span>
<span class=c style="left:23.42px;top:0.00px">            } <span class=k>else</span> <span class=k>if</span> (diffResult <span class=k>is</span> DiffResult.TextSplit &amp;&amp; newDiffType ==</span>
<span class=c style="left:23.42px;top:9.38px">TextDiffType.UNIFIED) { // Current <span class=k>is</span> split and new <span class=k>is</span> unified</span>
</div>
<div class=row style="top:194.54px;left:353.6px;width:352.2px;height:9.38px;">
<span class=n style="width:12.68px">68</span>
<span class=c style="left:23.42px;top:0.00px">                <span class=k>val</span> hunksList = diffResult.hunks.map { it.sourceHunk }</span>
</div>
<div class=row style="top:203.91px;left:353.6px;width:352.2px;height:9.38px;">
<span class=n style="width:12.68px">69</span>
<span class=c style="left:23.42px;top:0.00px"></span>
</div>
<div class=row style="top:213.29px;left:353.6px;width:352.2px;height:9.38px;">
<span class=n style="width:12.68px">70</span>
<span class=c style="left:23.42px;top:0.00px">                _viewDiffResult.value = ViewDiffResult.Loaded(</span>
</div>
<div class=row style="top:222.66px;left:353.6px;width:352.2px;height:9.38px;background:#445a50;">
<div style="position:absolute;left:105.26px;top:0;width:20.46px;height:9.376px;background:#2d6f3a"></div>
<div style="position:absolute;left:228.02px;top:0;width:20.46px;height:9.376px;background:#2d6f3a"></div>
<span class=n style="width:12.68px">71</span>
<span class=c style="left:23.42px;top:0.00px">                    <span class=ah>fileD</span>iffType = viewDiffResult.<span class=ah>fileD</span>iffType,</span>
</div>
<div class=row style="top:232.04px;left:353.6px;width:352.2px;height:18.75px;">
<span class=n style="width:12.68px">72</span>
<span class=c style="left:23.42px;top:0.00px">                    diffResult = DiffResult.Text(diffResult.diffEntry,</span>
<span class=c style="left:23.42px;top:9.38px">hunksList)</span>
</div>
<div class=row style="top:250.79px;left:353.6px;width:352.2px;height:9.38px;">
<span class=n style="width:12.68px">73</span>
<span class=c style="left:23.42px;top:0.00px">                )</span>
</div>
<div class=row style="top:260.17px;left:353.6px;width:352.2px;height:9.38px;">
<span class=n style="width:12.68px">74</span>
<span class=c style="left:23.42px;top:0.00px">            }</span>
</div>
<div class=hh style="top:269.55px;left:353.6px;width:352.2px;height:13.35px"></div>
<div class=row style="top:282.90px;left:353.6px;width:352.2px;height:9.32px;">
<span class=n style="width:16.78px">110</span>
<span class=c style="left:27.52px;top:0.00px">                return@runOperation</span>
</div>
<div class=row style="top:292.23px;left:353.6px;width:352.2px;height:9.32px;">
<span class=n style="width:16.78px">111</span>
<span class=c style="left:27.52px;top:0.00px">            }</span>
</div>
<div class=row style="top:301.55px;left:353.6px;width:352.2px;height:9.32px;">
<span class=n style="width:16.78px">112</span>
<span class=c style="left:27.52px;top:0.00px"></span>
</div>
<div class=row style="top:310.88px;left:353.6px;width:352.2px;height:9.32px;background:#445a50;">
<div style="position:absolute;left:92.99px;top:0;width:20.46px;height:9.325px;background:#2d6f3a"></div>
<div style="position:absolute;left:154.37px;top:0;width:16.37px;height:9.325px;background:#2d6f3a"></div>
<div style="position:absolute;left:232.12px;top:0;width:16.37px;height:9.325px;background:#2d6f3a"></div>
<span class=n style="width:16.78px">113</span>
<span class=c style="left:27.52px;top:0.00px">            <span class=k>val</span> <span class=ah>fileD</span>iffType = <span class=ah>File</span>DiffType.Commit<span class=ah>File</span>Diff(diffEntry)</span>
</div>
<div class=row style="top:320.20px;left:353.6px;width:352.2px;height:9.32px;">
<span class=n style="width:16.78px">114</span>
<span class=c style="left:27.52px;top:0.00px"></span>
</div>
<div class=row style="top:329.52px;left:353.6px;width:352.2px;height:9.32px;">
<span class=n style="width:16.78px">115</span>
<span class=c style="left:27.52px;top:0.00px">            <span class=k>val</span> diffResult = formatDiffUseCase(</span>
</div>
<div class=row style="top:338.85px;left:353.6px;width:352.2px;height:9.32px;">
<span class=n style="width:16.78px">116</span>
<span class=c style="left:27.52px;top:0.00px">                git,</span>
</div>
<div class=row style="top:348.17px;left:353.6px;width:352.2px;height:9.32px;background:#445a50;">
<div style="position:absolute;left:92.99px;top:0;width:20.46px;height:9.325px;background:#2d6f3a"></div>
<span class=n style="width:16.78px">117</span>
<span class=c style="left:27.52px;top:0.00px">                <span class=ah>fileD</span>iffType,</span>
</div>
<div class=row style="top:357.50px;left:353.6px;width:352.2px;height:9.32px;">
<span class=n style="width:16.78px">118</span>
<span class=c style="left:27.52px;top:0.00px">                <span class=k>false</span></span>
</div>
<div class=row style="top:366.82px;left:353.6px;width:352.2px;height:18.65px;">
<span class=n style="width:16.78px">119</span>
<span class=c style="left:27.52px;top:0.00px">            ) // TODO This hardcoded <span class=k>false</span> should be changed <span class=k>when</span> the UI <span class=k>is</span></span>
<span class=c style="left:27.52px;top:9.32px">implemented</span>
</div>
<div class=row style="top:385.47px;left:353.6px;width:352.2px;height:9.32px;">
<span class=n style="width:16.78px">120</span>
<span class=c style="left:27.52px;top:0.00px">            <span class=k>val</span> textDiffType = settings.textDiffType</span>
</div>
<div class=hh style="top:394.80px;left:353.6px;width:352.2px;height:13.4px"></div>
<div class=row style="top:408.20px;left:353.6px;width:352.2px;height:9.40px;">
<span class=n style="width:16.78px">124</span>
<span class=c style="left:27.52px;top:0.00px">            } <span class=k>else</span></span>
</div>
<div class=row style="top:417.60px;left:353.6px;width:352.2px;height:9.40px;">
<span class=n style="width:16.78px">125</span>
<span class=c style="left:27.52px;top:0.00px">                diffResult</span>
</div>
<div class=row style="top:427.00px;left:353.6px;width:352.2px;height:9.40px;">
<span class=n style="width:16.78px">126</span>
<span class=c style="left:27.52px;top:0.00px"></span>
</div>
<div class=row style="top:436.40px;left:353.6px;width:352.2px;height:18.80px;background:#445a50;">
<div style="position:absolute;left:264.85px;top:0;width:20.46px;height:9.400px;background:#2d6f3a"></div>
<span class=n style="width:16.78px">127</span>
<span class=c style="left:27.52px;top:0.00px">            _viewDiffResult.value = ViewDiffResult.Loaded(<span class=ah>fileD</span>iffType,</span>
<span class=c style="left:27.52px;top:9.40px">diffResult)</span>
</div>
  <div id="divider"></div>
  </div>
  <div id="dscroll"></div>
</div>

<div id="files">
  <div id="fhead"><span class="t">Files changed</span>
  <svg class="abs" style="left:0;top:0" width="168" height="18" viewBox="827.4 51.8 168 18" fill="none" stroke="#dfe6ee" stroke-width="0.9">
   <rect x="954.3" y="57.4" width="2.4" height="3" rx="0.8" stroke-width="1"/>
   <rect x="960.1" y="57.3" width="2.3" height="2.8" rx="0.7" stroke-width="1"/>
   <rect x="960.1" y="61.7" width="2.3" height="2.9" rx="0.7" stroke-width="1"/>
   <path d="M956.8 58.9h1.6v4.3h1.7M958.4 58.7h1.7" stroke-width="0.9"/>
   <circle cx="982.2" cy="59.9" r="2.1" stroke-width="1.1"/>
   <path d="M983.8 61.6l2.3 2.3" stroke-width="1.2"/>
  </svg></div>
<div class=fr style="top:18.20px;"><span class=fic style="top:5.6px"><svg width="6" height="8" viewBox="0 0 6 8"><path d="M0.2 1.1h5.6" stroke="#d23a3a" stroke-width="1"/><path d="M0.7 1.8h4.6l-.3 5.6a.6.6 0 0 1-.6.5H1.6a.6.6 0 0 1-.6-.5z" fill="#d23a3a"/></svg></span><span class=ft style="transform:scaleX(1.0000)"><span class=fa>src/main/kotlin/com/jetpackdu... </span><span class=fb>/DiffType.kt</span></span></div>
<div class=fr style="top:37.99px;"><span class=fic style="top:6.4px"><svg width="7" height="7" viewBox="0 0 14 14" stroke="#37a35a" stroke-width="1.4"><path d="M7 1.5v11M1.5 7h11"/></svg></span><span class=ft style="transform:scaleX(1.0000)"><span class=fa>src/main/kotlin/com/jetpac... </span><span class=fb>/FileDiffType.kt</span></span></div>
<div class=fr style="top:57.78px;"><span class=fic style="top:6.4px"><svg width="8" height="8" viewBox="0 0 16 16"><path d="M1.5 14.5l.9-3.3L11 2.6l2.4 2.4-8.6 8.6z" fill="#1f74d6"/></svg></span><span class=ft style="transform:scaleX(0.9858)"><span class=fa>src/main/kotlin/com...</span><span class=fb>/FormatDiffUseCase.kt</span></span></div>
<div class=fr style="top:77.57px;"><span class=fic style="top:6.4px"><svg width="8" height="8" viewBox="0 0 16 16"><path d="M1.5 14.5l.9-3.3L11 2.6l2.4 2.4-8.6 8.6z" fill="#1f74d6"/></svg></span><span class=ft style="transform:scaleX(0.9812)"><span class=fa>src/... </span><span class=fb>/GetDiffEntryFromDiffTypeUseCase.kt</span></span></div>
<div class=fr style="top:97.36px;"><span class=fic style="top:6.4px"><svg width="8" height="8" viewBox="0 0 16 16"><path d="M1.5 14.5l.9-3.3L11 2.6l2.4 2.4-8.6 8.6z" fill="#1f74d6"/></svg></span><span class=ft style="transform:scaleX(0.9849)"><span class=fa>src/main/kotlin/com/je... </span><span class=fb>/CommitChanges.kt</span></span></div>
<div class=fr style="top:117.15px;"><span class=fic style="top:6.4px"><svg width="8" height="8" viewBox="0 0 16 16"><path d="M1.5 14.5l.9-3.3L11 2.6l2.4 2.4-8.6 8.6z" fill="#1f74d6"/></svg></span><span class=ft style="transform:scaleX(1.0060)"><span class=fa>src/main/kotlin/com/jetpack... </span><span class=fb>/FileHistory.kt</span></span></div>
<div class=fr style="top:136.94px;"><span class=fic style="top:6.4px"><svg width="8" height="8" viewBox="0 0 16 16"><path d="M1.5 14.5l.9-3.3L11 2.6l2.4 2.4-8.6 8.6z" fill="#1f74d6"/></svg></span><span class=ft style="transform:scaleX(0.9821)"><span class=fa>src/main/kotlin/com/jet... </span><span class=fb>/RepositoryOpen.kt</span></span></div>
<div class=fr style="top:156.73px;"><span class=fic style="top:6.4px"><svg width="8" height="8" viewBox="0 0 16 16"><path d="M1.5 14.5l.9-3.3L11 2.6l2.4 2.4-8.6 8.6z" fill="#1f74d6"/></svg></span><span class=ft style="transform:scaleX(0.9710)"><span class=fa>src/main/kotlin/co... </span><span class=fb>/UncommitedChanges.kt</span></span></div>
<div class=fr style="top:176.52px;"><span class=fic style="top:6.4px"><svg width="8" height="8" viewBox="0 0 16 16"><path d="M1.5 14.5l.9-3.3L11 2.6l2.4 2.4-8.6 8.6z" fill="#1f74d6"/></svg></span><span class=ft style="transform:scaleX(1.0000)"><span class=fa>src/main/kotlin/com/jetpackduba/git...</span><span class=fb>/Diff.kt</span></span></div>
<div class=fr style="top:196.31px;"><span class=fic style="top:6.4px"><svg width="8" height="8" viewBox="0 0 16 16"><path d="M1.5 14.5l.9-3.3L11 2.6l2.4 2.4-8.6 8.6z" fill="#1f74d6"/></svg></span><span class=ft style="transform:scaleX(0.9981)"><span class=fa>src/main/kotlin/com/jetp... </span><span class=fb>/DiffViewModel.kt</span></span></div>
<div class=fr style="top:216.10px;background:#2e3540;"><span class=fic style="top:6.4px"><svg width="8" height="8" viewBox="0 0 16 16"><path d="M1.5 14.5l.9-3.3L11 2.6l2.4 2.4-8.6 8.6z" fill="#1f74d6"/></svg></span><span class=ft style="transform:scaleX(1.0001)"><span class=fa>src/main/kotlin/com/j...</span><span class=fb>/HistoryViewModel.kt</span></span></div>
<div class=fr style="top:235.89px;"><span class=fic style="top:6.4px"><svg width="8" height="8" viewBox="0 0 16 16"><path d="M1.5 14.5l.9-3.3L11 2.6l2.4 2.4-8.6 8.6z" fill="#1f74d6"/></svg></span><span class=ft style="transform:scaleX(0.9774)"><span class=fa>src/main/ko... </span><span class=fb>/RepositoryOpenViewModel.kt</span></span></div>
<div class=fr style="top:255.68px;"><span class=fic style="top:6.4px"><svg width="8" height="8" viewBox="0 0 16 16"><path d="M1.5 14.5l.9-3.3L11 2.6l2.4 2.4-8.6 8.6z" fill="#1f74d6"/></svg></span><span class=ft style="transform:scaleX(0.9924)"><span class=fa>src/main/kotlin/com/jetp... </span><span class=fb>/ViewDiffResult.kt</span></span></div>
</div>
<div id="msg"><div class="t">Refactored to have a base to support<br>selecting multiple files</div></div>
<div id="author"><div id="avatar">A</div><span class="nm">Abdellah El Aissaoui</span><span class="hs">8cc0c35</span><span class="dt">2024年12月30日 上午8:09</span></div>
<div id="bottomline"></div>
</div></body></html>
